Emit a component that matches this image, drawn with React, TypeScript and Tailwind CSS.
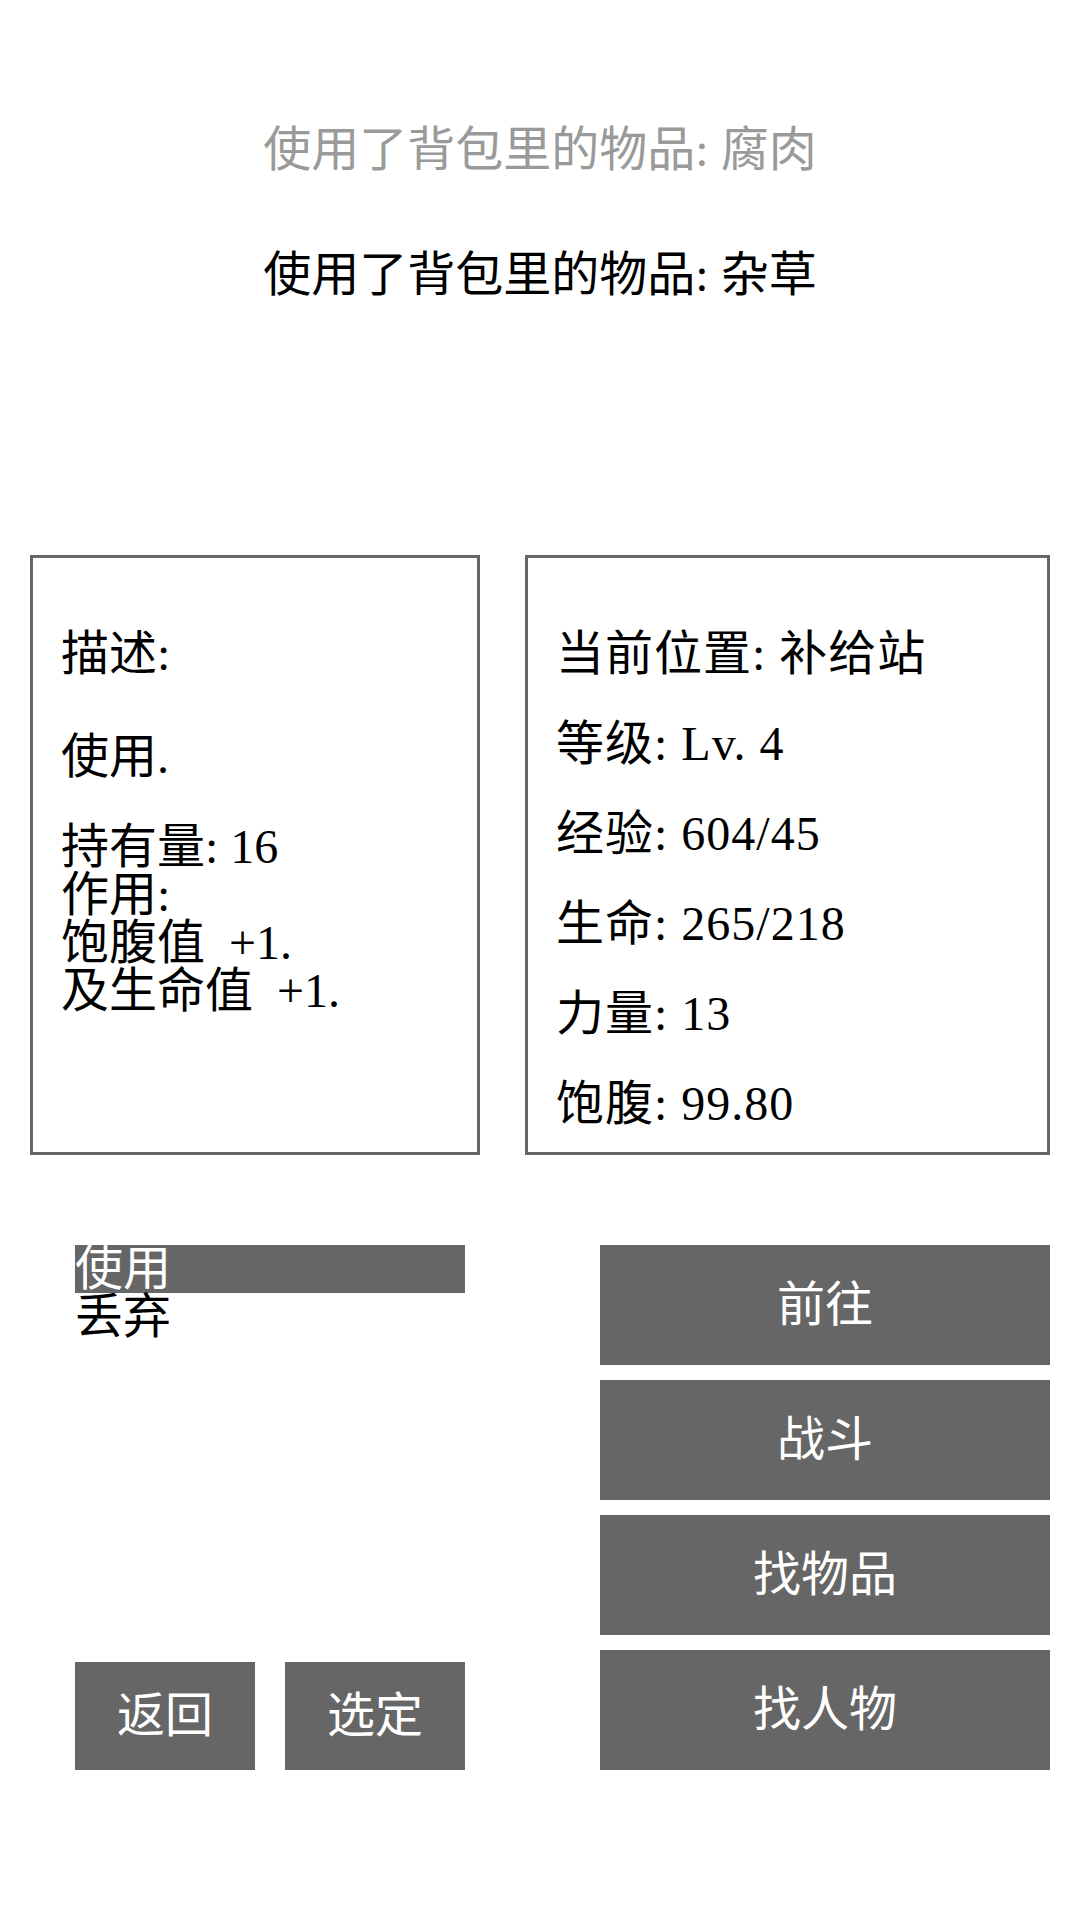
const FONT = "font-['Liberation_Serif','Noto_Sans_CJK_SC',serif]";

const STATS = [
  '当前位置: 补给站',
  '等级: Lv. 4',
  '经验: 604/45',
  '生命: 265/218',
  '力量: 13',
  '饱腹: 99.80',
];

const ACTIONS = ['前往', '战斗', '找物品', '找人物'];

function ActionButton({ label, className }: { label: string; className: string }) {
  return (
    <button
      type="button"
      className={`flex items-center justify-center bg-[#666666] text-[48px] leading-[48px] text-white ${className}`}
    >
      {label}
    </button>
  );
}

export default function App() {
  return (
    <div className={`flex h-[1920px] w-[1080px] flex-col bg-white text-black ${FONT}`}>
      {/* 消息记录 */}
      <div className="flex flex-col items-center pt-[126px] text-[48px] leading-[48px]">
        <p className="text-[#9a9a9a]">使用了背包里的物品: 腐肉</p>
        <p className="mt-[77px]">使用了背包里的物品: 杂草</p>
      </div>

      {/* 物品描述 + 角色状态 */}
      <div className="mt-[256px] flex gap-[45px] pl-[30px]">
        <div className="h-[600px] w-[450px] border-[3px] border-[#666666] pl-[28px] pt-[72px] text-[48px] leading-[48px]">
          <p>描述:</p>
          <p className="mt-[55px]">使用.</p>
          <p className="mt-[42px]">持有量: 16</p>
          <p>作用:</p>
          <p>饱腹值&nbsp; +1.</p>
          <p>及生命值&nbsp; +1.</p>
        </div>
        <div className="h-[600px] w-[525px] border-[3px] border-[#666666] pl-[28px] pt-[51px] text-[48px] leading-[90px] tracking-[1px]">
          {STATS.map((s) => (
            <p key={s}>{s}</p>
          ))}
        </div>
      </div>

      {/* 操作区 */}
      <div className="mt-[90px] flex gap-[135px] pl-[75px]">
        <div className="flex w-[390px] flex-col justify-between">
          <ul className="text-[48px] leading-[48px]">
            <li className="bg-[#666666] text-white">使用</li>
            <li>丢弃</li>
          </ul>
          <div className="flex gap-[30px]">
            <ActionButton label="返回" className="h-[108px] w-[180px]" />
            <ActionButton label="选定" className="h-[108px] w-[180px]" />
          </div>
        </div>
        <div className="flex w-[450px] flex-col gap-[15px]">
          {ACTIONS.map((a) => (
            <ActionButton key={a} label={a} className="h-[120px] w-full" />
          ))}
        </div>
      </div>
    </div>
  );
}
